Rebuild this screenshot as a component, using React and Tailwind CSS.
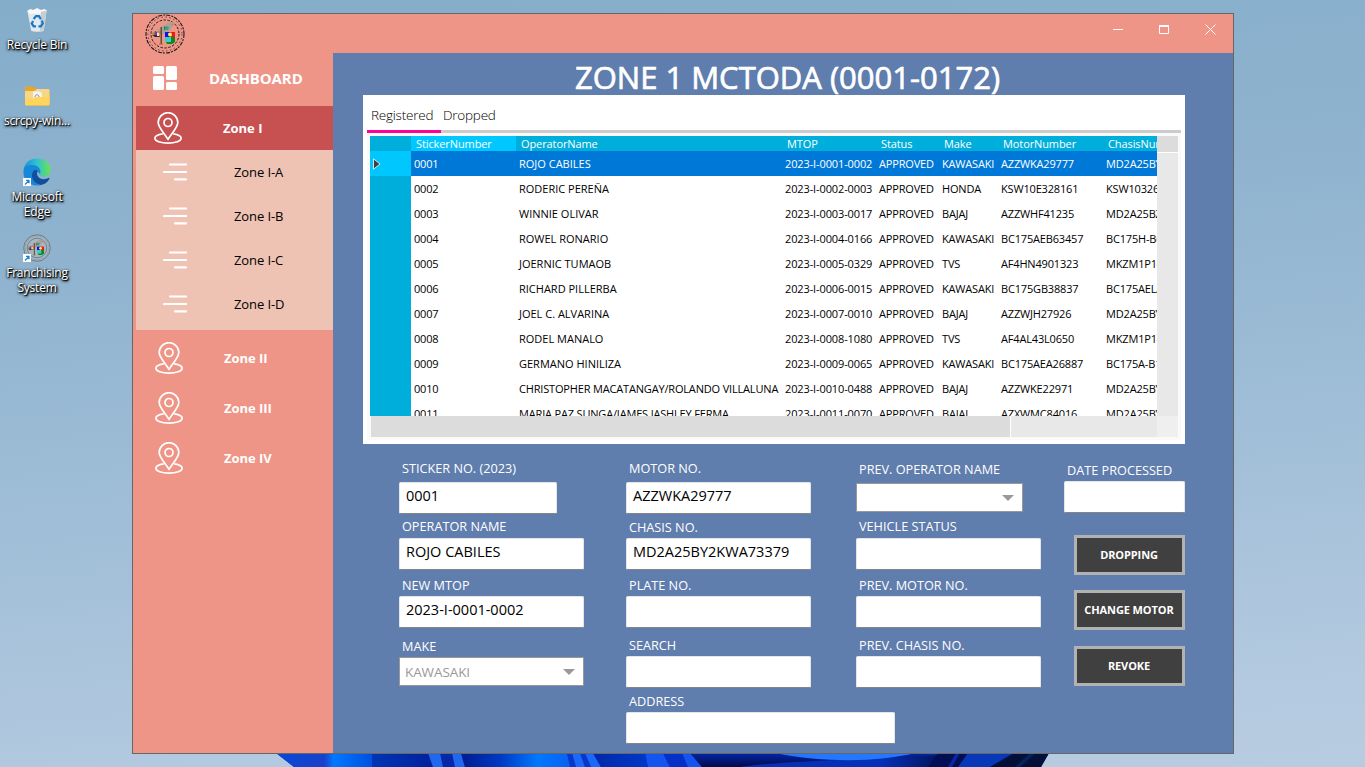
const rows = [
  ["0001", "ROJO CABILES", "2023-I-0001-0002", "APPROVED", "KAWASAKI", "AZZWKA29777", "MD2A25BY2KWA"],
  ["0002", "RODERIC PEREÑA", "2023-I-0002-0003", "APPROVED", "HONDA", "KSW10E328161", "KSW103267"],
  ["0003", "WINNIE OLIVAR", "2023-I-0003-0017", "APPROVED", "BAJAJ", "AZZWHF41235", "MD2A25BZ"],
  ["0004", "ROWEL RONARIO", "2023-I-0004-0166", "APPROVED", "KAWASAKI", "BC175AEB63457", "BC175H-B6"],
  ["0005", "JOERNIC TUMAOB", "2023-I-0005-0329", "APPROVED", "TVS", "AF4HN4901323", "MKZM1P14"],
  ["0006", "RICHARD PILLERBA", "2023-I-0006-0015", "APPROVED", "KAWASAKI", "BC175GB38837", "BC175AELA"],
  ["0007", "JOEL C. ALVARINA", "2023-I-0007-0010", "APPROVED", "BAJAJ", "AZZWJH27926", "MD2A25BY"],
  ["0008", "RODEL MANALO", "2023-I-0008-1080", "APPROVED", "TVS", "AF4AL43L0650", "MKZM1P14"],
  ["0009", "GERMANO HINILIZA", "2023-I-0009-0065", "APPROVED", "KAWASAKI", "BC175AEA26887", "BC175A-B1"],
  ["0010", "CHRISTOPHER MACATANGAY/ROLANDO VILLALUNA", "2023-I-0010-0488", "APPROVED", "BAJAJ", "AZZWKE22971", "MD2A25BY"],
  ["0011", "MARIA PAZ SUNGA/JAMES JASHLEY FERMA", "2023-I-0011-0070", "APPROVED", "BAJAJ", "AZXWMC84016", "MD2A25BY"],
];
const heads = ["StickerNumber", "OperatorName", "MTOP", "Status", "Make", "MotorNumber", "ChasisNumber"];
const gridCols = "grid grid-cols-[41px_105px_266px_94px_63px_59px_105px_105px]";

function Seal({ className, ring = "#1c1c1c", dashed = true }) {
  return (
    <svg viewBox="0 0 40 40" className={className} fill="none">
      <circle cx="20" cy="20" r="19" stroke={ring} strokeWidth="1.100" strokeDasharray={dashed ? "4 1.2 2 1" : undefined} />
      <circle cx="20" cy="20" r="17" stroke={ring} strokeWidth=".7" strokeDasharray={dashed ? "1.5 2.5" : "1 1"} />
      <circle cx="20" cy="20" r="14" stroke={ring} strokeWidth="1" strokeDasharray={dashed ? "2.5 1.5" : undefined} />
      <path d="M11 17l3-2 3-3 3-1 2-2 6-1 2 1-3 4-2 3-4 2-4 3-5 1z" fill="#a9a29b" />
      <path d="M7 19l3-2v4H7z" fill="#c98a35" />
      <path d="M10 17l2 1v4h-3z" fill="#7a3aa0" />
      <path d="M13 17h3v3h-3zM27 9l2 2-3 1z" fill="#e67a30" />
      <path d="M15.500 13h1.500v17h-1.500zM19 12l2 2-2 3z" fill="#6a4b30" />
      <path d="M21 12l3 1-1 3h-4z" fill="#2fa48a" />
      <path d="M7 21h7l1 2h-5z" fill="#332c2c" />
      <path d="M12 19h2v3h-2z" fill="#e8e4e0" />
      <path d="M20 18h5v5h-5z" fill="#1010f0" />
      <path d="M25 18h5v5h-5z" fill="#f01818" />
      <circle cx="25" cy="20.500" r="2" fill="#fff34a" />
      <path d="M20 23h6v5h-6z" fill="#35d0c8" />
      <path d="M26 23h4v5l-3 2h-5l-1-2h5z" fill="#0c8a1c" />
      <path d="M14 30h4" stroke="#a07030" />
    </svg>
  );
}

function Shortcut() {
  return (
    <svg viewBox="0 0 8 8" className="absolute bottom-0 left-0 size-2">
      <path d="M0 0h8v8H0z" fill="#fff" />
      <path d="M2 6.500L5.500 3M3 2.300h3v3" stroke="#1b7fd6" strokeWidth="1.200" fill="none" />
    </svg>
  );
}

function DesktopIcon({ lines, className, children }) {
  return (
    <div className={"flex w-[74px] flex-col items-center " + className}>
      <div className="relative flex h-7 w-7 items-center justify-center">{children}</div>
      <div className="mt-[3px] whitespace-nowrap text-center text-[12px] leading-[15px] tracking-[-0.2px] text-white [text-shadow:1px_1px_1px_#000,0_1px_3px_#000,1px_1px_3px_#000]">
        {lines.map((l) => <div key={l}>{l}</div>)}
      </div>
    </div>
  );
}

function Pin() {
  return (
    <svg viewBox="0 0 28 32" className="h-8 w-7" fill="none" stroke="#fff" strokeWidth="1.700" strokeLinejoin="round">
      <path d="M14 27.500C12 23 4.200 16 4.200 10.500a9.800 9.800 0 0 1 19.600 0C23.800 16 16 23 14 27.500z" />
      <circle cx="14" cy="10.500" r="4" />
      <path d="M8.800 21.900C4 22.600.9 24.200.9 26.200c0 2.800 5.800 4.900 13.100 4.900s13.100-2.100 13.100-4.900c0-2-3.100-3.600-7.900-4.300" />
    </svg>
  );
}

function Label({ children }) {
  return <div className="h-[18px] whitespace-nowrap pl-[3px] text-[12.7px] leading-[18px] text-white">{children}</div>;
}

function Field({ label, value = "", top, gap, w = "w-[185px]" }) {
  return (
    <div className={top}>
      <Label>{label}</Label>
      <div className={"h-8 rounded-[2px] border border-[#e6e6e6] border-b-[#858585] bg-white pl-[6px] text-[14.5px] leading-[26px] text-black " + gap + " " + w}>{value}</div>
    </div>
  );
}

function Combo({ label, value = "", top, gap, w }) {
  return (
    <div className={top}>
      <Label>{label}</Label>
      <div className={"flex h-[29px] items-center justify-between border border-[#999] bg-white pl-[5px] pr-2 text-[13.5px] tracking-[-0.1px] text-[#999] " + gap + " " + w}>
        <span className="pt-px">{value}</span>
        <svg viewBox="0 0 12 6" className="h-1.5 w-3"><path d="M0 0h12L6 6z" fill="#999" /></svg>
      </div>
    </div>
  );
}

function DarkButton({ children, className }) {
  return (
    <button className={"flex h-10 w-[111px] items-center justify-center whitespace-nowrap border-[3px] border-[#b2b2b2] bg-[#404040] pr-px text-[11px] font-bold tracking-[-0.1px] text-white " + className}>
      {children}
    </button>
  );
}

function Wallpaper() {
  return (
    <svg viewBox="0 0 800 17" className="absolute bottom-0 left-[260px] h-[17px] w-[800px]" preserveAspectRatio="none">
      <defs>
        <linearGradient id="petalA" x1="0" x2="1"><stop offset="0" stopColor="#0848d8" /><stop offset=".5" stopColor="#1a40c8" /><stop offset=".6" stopColor="#0078ff" /><stop offset="1" stopColor="#0050e0" /></linearGradient>
        <linearGradient id="petalB" x1="0" x2="1"><stop offset="0" stopColor="#0034b4" /><stop offset="1" stopColor="#00209c" /></linearGradient>
        <linearGradient id="petalC" x1="0" x2="1"><stop offset="0" stopColor="#001c90" /><stop offset=".35" stopColor="#0038c0" /><stop offset=".7" stopColor="#0078ff" /><stop offset="1" stopColor="#0a60f0" /></linearGradient>
        <linearGradient id="petalD" x1="0" x2="1"><stop offset="0" stopColor="#0028a8" /><stop offset="1" stopColor="#0038c8" /></linearGradient>
        <linearGradient id="petalE" x1="0" x2="0" y1="0" y2="1"><stop offset="0" stopColor="#0426a8" /><stop offset="1" stopColor="#010a4c" /></linearGradient>
        <linearGradient id="petalF" x1="0" x2="1"><stop offset="0" stopColor="#0430b8" /><stop offset=".7" stopColor="#0530b8" /><stop offset="1" stopColor="#01145c" /></linearGradient>
      </defs>
      <path d="M16 3H789L781 17H34z" fill="#0428a8" />
      <path d="M16 3h96v14H34z" fill="url(#petalA)" />
      <path d="M112 3h56l8 14h-64z" fill="url(#petalB)" />
      <path d="M168 3h12l3 14h-10zM192 3h9l4 14h-10z" fill="#2068f0" />
      <path d="M201 3h106l4 14H205z" fill="url(#petalC)" />
      <path d="M307 3h5l4 14h-6zM320 3h5l6 14h-6z" fill="#0838c8" />
      <path d="M312 3h8l5 14h-9zM325 3h8l8 14h-10z" fill="#1c68f8" />
      <path d="M333 3h52l3 14h-47z" fill="url(#petalD)" />
      <path d="M385 3h18l7 14h-22zM422 3h8l12 14h-18z" fill="#1454f0" />
      <path d="M403 3h19l6 14h-18z" fill="#0530c8" />
      <path d="M430 3h240v14H442z" fill="url(#petalE)" />
      <path d="M480 17c50-7 130-7 200-12v12z" fill="url(#petalF)" />
      <path d="M515 3h140c-35 9-90 10-140 0z" fill="#2478ff" />
      <path d="M678 3h18l-8 14h-20zM708 3h-8l-8 14h8z" fill="#020e54" />
      <path d="M708 3h46l-24 14h-32z" fill="#0838b8" />
      <path d="M754 3h35l-8 14h-51z" fill="#021038" />
      <path d="M770 3h6l-16 14h-5z" fill="#04225c" />
    </svg>
  );
}

export default function App() {
  return (
    <div className="relative h-[767px] w-[1365px] overflow-hidden bg-[linear-gradient(175deg,#84adca_0%,#8fb3cf_30%,#a0bed7_60%,#b2c9df_88%,#b8cce1_100%)] font-['Open_Sans','Noto_Sans',sans-serif]">
      <Wallpaper />
      <div className="flex w-[74px] flex-col">
        <DesktopIcon lines={["Recycle Bin"]} className="mt-[6px]">
          <svg viewBox="0 0 28 28" className="size-7 pt-px">
            <path d="M4 4l20-1-3 21.500c-3 1.500-10 1.500-13 0z" fill="#e5e8ea" />
            <path d="M4 4l3-2 3 1 4-2 4 2 4-1 2 2-2 3H6z" fill="#f8f8f8" />
            <path d="M18 5l6-1-3 20-4 1z" fill="#c8cdd0" />
            <path d="M10.500 12.500l2.500-3h3l2 3M19 14l1 3-2 3h-2.500M13 20h-2.500L8.500 17l1.500-2.500" fill="none" stroke="#1479cf" strokeWidth="2.300" />
          </svg>
        </DesktopIcon>
        <DesktopIcon lines={["scrcpy-win..."]} className="mt-[30px]">
          <svg viewBox="0 0 28 28" className="size-7">
            <path d="M2 6c0-1 1-1.500 2-1.500h6l3 2.500h12c1 0 1.500.5 1.500 1.500V22c0 1-.5 1.500-1.500 1.500H3.500C2.500 23.500 2 23 2 22z" fill="#eaa521" />
            <path d="M2 9h9l3-2h11c1 0 1.500.5 1.500 1.500V22H2z" fill="#f9d588" />
            <path d="M10 9.500h7l2 2V17h-9z" fill="#f4f4f4" />
            <path d="M12 15c0-3 4-3 4 0" fill="none" stroke="#8a8f9a" />
            <path d="M2 16.500h8l2-1.500h14.500v7c0 1-.5 1.500-1.500 1.500H3.500C2.500 23.500 2 23 2 22z" fill="#ffd45c" />
          </svg>
        </DesktopIcon>
        <DesktopIcon lines={["Microsoft", "Edge"]} className="mt-[30px]">
          <svg viewBox="0 0 28 28" className="size-7">
            <defs>
              <linearGradient id="edge" x1="0" x2="1"><stop offset="0" stopColor="#1590dc" /><stop offset=".5" stopColor="#2fc3cf" /><stop offset="1" stopColor="#6be34e" /></linearGradient>
            </defs>
            <path d="M.5 13C1 5 7 .5 14 .5S27.500 5 27.500 12c0 4-3 6.500-7 6.500-3 0-5-1-3.500-3 2-3-1-6.500-5-6.500C6 9 1 11 .5 13z" fill="url(#edge)" />
            <path d="M.5 13.500C1 8.500 5 7 9 7c5 0 8.500 3 8.500 6.500 0 1-.5 2-1 2.500-1-3-5-4-6.500-1-2 5 2 12 8 12-9 2.500-18-3-17.500-13.500z" fill="#1787d8" />
            <path d="M10.500 13c-4 5 0 13 7 14 4-.5 7.500-3 9-6.500.2-.6-.3-.8-.8-.5-4 2-9 1.500-11-2-1-2-.8-3.500 0-5-1.500-1.500-3.500-1-4.200 0z" fill="#0f4f9e" />
          </svg>
          <Shortcut />
        </DesktopIcon>
        <DesktopIcon lines={["Franchising", "System"]} className="mt-[15px]">
          <div className="size-7 rounded-full bg-[#a3b6c4]"><Seal className="size-7" ring="#5c6b77" dashed={false} /></div>
          <Shortcut />
        </DesktopIcon>
      </div>

      <div className="absolute left-[132px] top-[13px] flex h-[741px] w-[1102px] flex-col border border-[#666] bg-[#ef9587]">
        <header className="flex h-[39px] shrink-0 justify-between">
          <Seal className="ml-3 size-10" />
          <div className="flex gap-[35px] pr-[17px] pt-[10px]">
            <svg viewBox="0 0 11 11" className="size-[11px]"><path d="M0 5.500h10" stroke="#fff" /></svg>
            <svg viewBox="0 0 11 11" className="size-[11px]"><path d="M.5 2v7.500h9V2" stroke="#fff" fill="none" /><path d="M0 2h10" stroke="#fff" strokeWidth="2" /></svg>
            <svg viewBox="0 0 11 11" className="size-[11px]"><path d="M.5.500l10 10M10.500.500l-10 10" stroke="#fff" /></svg>
          </div>
        </header>

        <div className="flex min-h-0 flex-1">
          <nav className="w-[200px] shrink-0 pl-[3px] text-[13px] text-white">
            <div className="flex h-[53px] items-center pb-[3px] pl-[17px]">
              <svg viewBox="0 0 24 24" className="size-6" fill="#fff">
                <rect width="11" height="8" rx="1.500" /><rect y="10" width="11" height="14" rx="1.500" />
                <rect x="13" width="11" height="14" rx="1.500" /><rect x="13" y="16" width="11" height="8" rx="1.500" />
              </svg>
              <span className="ml-8 text-[15px] font-bold tracking-[-0.1px]">DASHBOARD</span>
            </div>
            <div className="flex h-11 items-center bg-[#c75050] pl-[18px] font-bold">
              <Pin /><span className="ml-[41px] pt-[2px]">Zone I</span>
            </div>
            <div className="h-[180px] bg-[#eec3b4] text-black">
              {["Zone I-A", "Zone I-B", "Zone I-C", "Zone I-D"].map((z) => (
                <div key={z} className="flex h-11 items-center pl-[27px]">
                  <svg viewBox="0 0 24 18" className="h-[18px] w-6" stroke="#fff" strokeWidth="2.200" strokeLinecap="round"><path d="M7 1.500h16M1 9h22M12 16.300h11" /></svg>
                  <span className="ml-[47px] pt-[2px] tracking-[-0.1px]">{z}</span>
                </div>
              ))}
            </div>
            <div className="pt-[3px] font-bold">
              {["Zone II", "Zone III", "Zone IV"].map((z) => (
                <div key={z} className="flex h-[50px] items-center pl-[19px]">
                  <Pin /><span className="ml-[41px] pt-[2px] tracking-[-0.05px]">{z}</span>
                </div>
              ))}
            </div>
          </nav>

          <main className="flex-1 bg-[#5f7dad] pl-[30px] pr-12">
            <h1 className="flex h-[42px] items-center justify-center whitespace-nowrap pl-[27px] pt-[6px] text-[31px] font-medium text-white [-webkit-text-stroke:0.7px_#fff]">ZONE 1 MCTODA (0001-0172)</h1>
            <section className="h-[349px] bg-white px-1">
              <div className="flex h-[38px] border-b-[3px] border-[#ccc] text-[13.5px] font-light tracking-[-0.22px] text-black">
                <div className="h-[38px] w-[74px] border-b-[3px] border-[#ff0097] pl-1 pt-[10px]">Registered</div>
                <div className="pl-[2px] pt-[10px]">Dropped</div>
              </div>
              <div className="h-[307px] bg-[#fafafa] px-[3px] pt-[3px]">
                <div className="flex h-[280px]">
                  <div className="w-[787px] overflow-hidden bg-white text-[11px]">
                    <div className={gridCols + " h-[15px] bg-[#00aedb] leading-[15px] tracking-[-0.1px] text-white"}>
                      <span />
                      {heads.map((h, i) => (
                        <span key={h} className={i === 0 ? "bg-[#00c8ff] pl-[5px]" : "pl-[5px]"}>{h}</span>
                      ))}
                    </div>
                    {rows.map((r, n) => (
                      <div key={r[0]} className={gridCols + " h-[25px] whitespace-nowrap leading-[25px] " + (n === 0 ? "bg-[#0078d7] text-white" : "text-black")}>
                        <span className={n === 0 ? "flex items-center bg-[#00c8ff] pl-[3px]" : "bg-[#00aedb]"}>
                          {n === 0 && <svg viewBox="0 0 8 12" className="h-3 w-2"><path d="M.5.800v10.400L7 6z" fill="#404040" stroke="#fff" strokeWidth=".8" /></svg>}
                        </span>
                        {r.map((c, i) => <span key={i} className={"pl-[3px] " + (i === 1 && c.length < 20 ? "tracking-[0px]" : i === 2 ? "tracking-[-0.12px]" : "tracking-[-0.17px]")}>{c}</span>)}
                      </div>
                    ))}
                  </div>
                  <div className="w-[21px] bg-[#e8e8e8]">
                    <div className="h-[17px] border-b border-white bg-[#dcdcdc]" />
                  </div>
                </div>
                <div className="ml-px flex h-[21px]">
                  <div className="w-[640px] border-r border-white bg-[#dcdcdc]" />
                  <div className="w-[146px] bg-[#e8e8e8]" />
                  <div className="w-[21px] bg-[#efefef]" />
                </div>
              </div>
            </section>

            <section className="flex pl-9">
              <div className="w-[227px]">
                <Field top="mt-[15px]" gap="mt-[5px]" w="w-[158px]" label="STICKER NO. (2023)" value="0001" />
                <Field top="mt-[3px]" gap="mt-[3px]" label="OPERATOR NAME" value="ROJO CABILES" />
                <Field top="mt-[6px]" gap="mt-[2px]" label="NEW MTOP" value="2023-I-0001-0002" />
                <Combo top="mt-[9px]" gap="mt-[2px]" w="w-[185px]" label="MAKE" value="KAWASAKI" />
              </div>
              <div className="w-[230px]">
                <Field top="mt-[15px]" gap="mt-[5px]" label="MOTOR NO." value="AZZWKA29777" />
                <Field top="mt-[4px]" gap="mt-[2px]" label="CHASIS NO." value="MD2A25BY2KWA73379" />
                <Field top="mt-[6px]" gap="mt-[2px]" label="PLATE NO." />
                <Field top="mt-[8px]" gap="mt-[2px]" label="SEARCH" />
                <Field top="mt-[4px]" gap="mt-[2px]" w="w-[269px]" label="ADDRESS" />
              </div>
              <div className="w-[208px]">
                <Combo top="mt-[16px]" gap="mt-[5px]" w="w-[167px]" label="PREV. OPERATOR NAME" />
                <Field top="mt-[5px]" gap="mt-[3px]" label="VEHICLE STATUS" />
                <Field top="mt-[6px]" gap="mt-[2px]" label="PREV. MOTOR NO." />
                <Field top="mt-[8px]" gap="mt-[2px]" label="PREV. CHASIS NO." />
              </div>
              <div className="flex w-[121px] flex-col">
                <Field top="mt-[17px]" gap="mt-[2px]" w="w-[121px]" label="DATE PROCESSED" />
                <DarkButton className="mt-[22px] self-end">DROPPING</DarkButton>
                <DarkButton className="mt-[15px] self-end">CHANGE MOTOR</DarkButton>
                <DarkButton className="mt-[16px] self-end">REVOKE</DarkButton>
              </div>
            </section>
          </main>
        </div>
      </div>
    </div>
  );
}
